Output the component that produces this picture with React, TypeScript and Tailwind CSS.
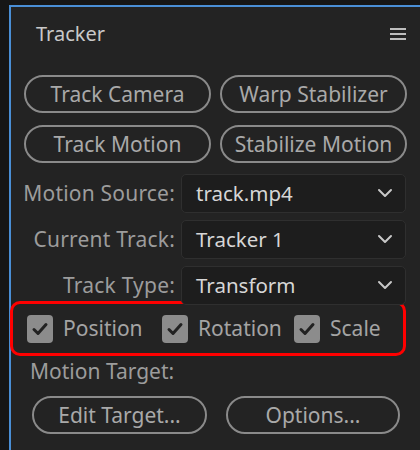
import React from 'react';

const font = { fontFamily: '"Noto Sans", "Open Sans", sans-serif' };

function PillButton({ label, className }: { label: string; className?: string }) {
  return (
    <button
      className={`h-[38px] rounded-full border-2 border-[#8a8a8a] text-[21px] text-[#a9a9a9] leading-none ${className ?? ''}`}
    >
      {label}
    </button>
  );
}

function SelectRow({ label, value }: { label: string; value: string }) {
  return (
    <div className="flex items-center h-[40px]">
      <div className="w-[170px] pr-[6px] text-right text-[21px] text-[#9c9c9c] leading-none tracking-[0.2px]">{label}</div>
      <div className="flex-1 h-[39px] mr-[14px] flex items-center justify-between rounded-[5px] border border-[#2f2f2f] bg-[#1d1d1d] pl-[14px] pr-[12px]">
        <span className="text-[20.5px] text-[#d6d6d6] leading-none">{value}</span>
        <svg width="16" height="10" viewBox="0 0 16 10" fill="none">
          <path d="M2 2 L8 8 L14 2" stroke="#c8c8c8" strokeWidth="2" strokeLinecap="round" strokeLinejoin="round" />
        </svg>
      </div>
    </div>
  );
}

function Check({ label, className }: { label: string; className?: string }) {
  return (
    <div className={`flex items-center gap-[10px] ${className ?? ''}`}>
      <div className="w-[26px] h-[28px] rounded-[4px] bg-[#8c8c8c] flex items-center justify-center">
        <svg width="18" height="16" viewBox="0 0 18 16" fill="none">
          <path d="M3 8.5 L7 12.5 L15 3.5" stroke="#222" strokeWidth="3" strokeLinecap="round" strokeLinejoin="round" />
        </svg>
      </div>
      <span className="text-[21px] text-[#a4a4a4] leading-none">{label}</span>
    </div>
  );
}

export default function App() {
  return (
    <div className="w-[420px] h-[450px] bg-[#161616] pt-[5px] pl-[9px] overflow-hidden" style={font}>
      <div className="w-full h-full bg-[#232323] border-t-2 border-l-2 border-[#4a8fd6]">
        <div className="flex items-center justify-between h-[68px] pl-[25px] pr-[14px] pb-[14px]">
          <span className="text-[20px] text-[#c9c9c9]">Tracker</span>
          <svg width="16" height="14" viewBox="0 0 16 14">
            <rect x="0" y="1" width="16" height="2" fill="#bdbdbd" />
            <rect x="0" y="6" width="16" height="2" fill="#bdbdbd" />
            <rect x="0" y="11" width="16" height="2" fill="#bdbdbd" />
          </svg>
        </div>
        <div className="grid grid-cols-2 gap-x-[9px] gap-y-[12px] pl-[13px] pr-[13px]">
          <PillButton label="Track Camera" />
          <PillButton label="Warp Stabilizer" />
          <PillButton label="Track Motion" />
          <PillButton label="Stabilize Motion" />
        </div>
        <div className="flex flex-col gap-[6px] mt-[10px]">
          <SelectRow label="Motion Source:" value="track.mp4" />
          <SelectRow label="Current Track:" value="Tracker 1" />
          <SelectRow label="Track Type:" value="Transform" />
        </div>
        <div className="ml-[-1px] mr-[14px] mt-[-4px] h-[55px] rounded-[10px] border-[3px] border-[#ff0000] flex items-center pl-[14px]">
          <Check label="Position" className="w-[135px]" />
          <Check label="Rotation" className="w-[132px]" />
          <Check label="Scale" />
        </div>
        <div className="pl-[19px] mt-[3px] text-[21px] text-[#9c9c9c] leading-[24px]">Motion Target:</div>
        <div className="flex gap-[19px] pl-[21px] mt-[13px]">
          <PillButton label="Edit Target..." className="w-[175px]" />
          <PillButton label="Options..." className="w-[174px]" />
        </div>
      </div>
    </div>
  );
}
